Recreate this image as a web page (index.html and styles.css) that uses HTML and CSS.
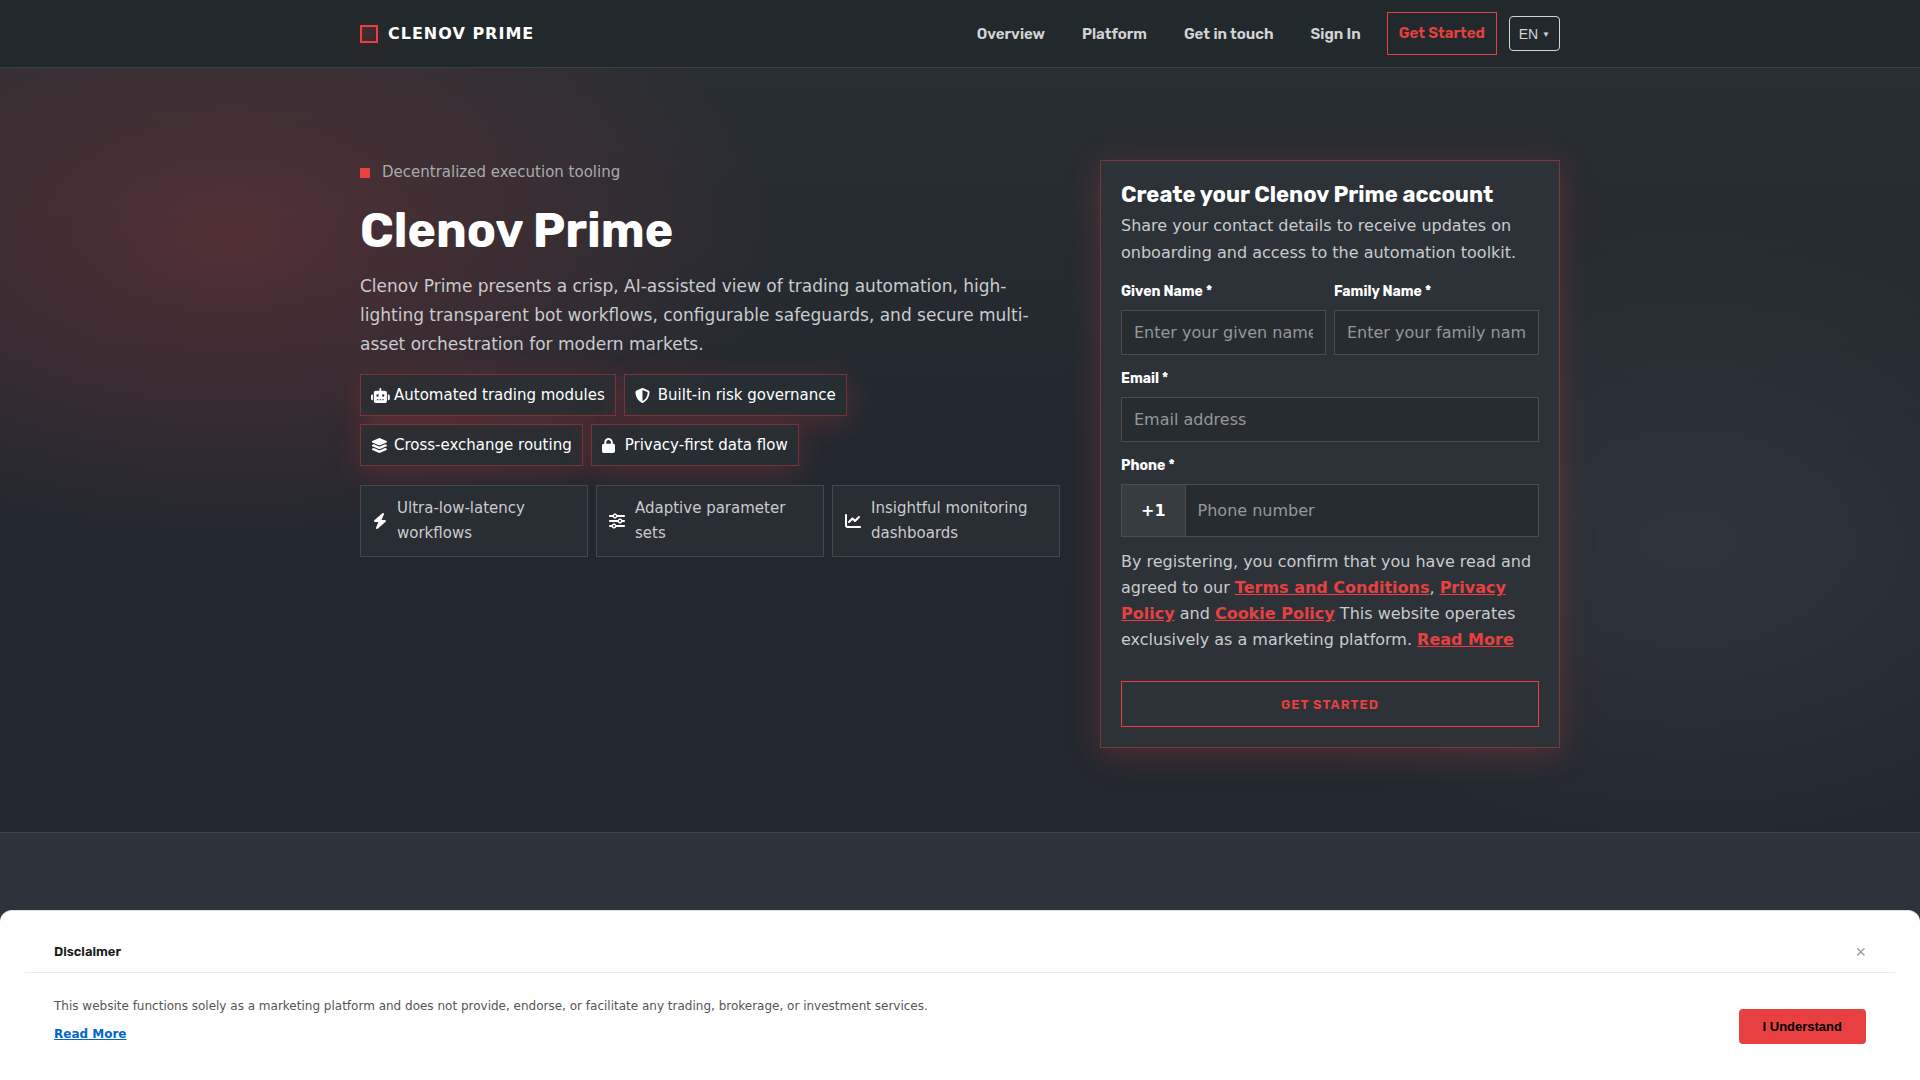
FILE: index.html
```html
<!DOCTYPE html>
<html lang="en">

<head>
    <meta charset="UTF-8">
    <meta name="viewport" content="width=device-width, initial-scale=1.0">
    <title>Clenov Prime</title>
    <link rel="stylesheet" href="styles.css">
</head>

<body>
    <header class="site-header">
        <div class="container header-inner">
            <a href="#" class="brand">
                <span class="brand-mark"></span>
                <span>CLENOV PRIME</span>
            </a>
            <nav class="nav">
                <a href="#overview" class="nav-link">Overview</a>
                <a href="#platform" class="nav-link">Platform</a>
                <a href="#contact" class="nav-link">Get in touch</a>
                <a href="#signin" class="nav-link">Sign In</a>
                <a href="#signup" class="nav-cta">Get Started</a>
                <button type="button" class="lang-button">EN <span class="caret">▼</span></button>
            </nav>
        </div>
    </header>

    <main>
        <section class="hero">
            <div class="container hero-grid">
                <div class="hero-copy">
                    <p class="eyebrow"><span class="eyebrow-mark"></span>Decentralized execution tooling</p>
                    <h1>Clenov Prime</h1>
                    <p class="lead">Clenov Prime presents a crisp, AI-assisted view of trading automation, high-lighting transparent bot workflows, configurable safeguards, and secure multi-asset orchestration for modern markets.</p>

                    <ul class="chips">
                        <li class="chip">
                            <span class="chip-icon"><svg viewBox="0 0 640 512"><path d="M320 0c17.7 0 32 14.3 32 32l0 64 120 0c39.8 0 72 32.2 72 72l0 272c0 39.8-32.2 72-72 72l-304 0c-39.8 0-72-32.2-72-72l0-272c0-39.8 32.2-72 72-72l120 0 0-64c0-17.7 14.3-32 32-32zM208 384c-8.8 0-16 7.2-16 16s7.2 16 16 16l32 0c8.8 0 16-7.2 16-16s-7.2-16-16-16l-32 0zm96 0c-8.8 0-16 7.2-16 16s7.2 16 16 16l32 0c8.8 0 16-7.2 16-16s-7.2-16-16-16l-32 0zm96 0c-8.8 0-16 7.2-16 16s7.2 16 16 16l32 0c8.8 0 16-7.2 16-16s-7.2-16-16-16l-32 0zM264 256a40 40 0 1 0 -80 0 40 40 0 1 0 80 0zm152 40a40 40 0 1 0 0-80 40 40 0 1 0 0 80zM48 224l16 0 0 192-16 0c-26.5 0-48-21.5-48-48l0-96c0-26.5 21.5-48 48-48zm544 0c26.5 0 48 21.5 48 48l0 96c0 26.5-21.5 48-48 48l-16 0 0-192 16 0z"/></svg></span>
                            Automated trading modules
                        </li>
                        <li class="chip">
                            <span class="chip-icon"><svg viewBox="0 0 512 512"><path d="M256 0c4.6 0 9.2 1 13.4 2.9L457.7 82.8c22 9.3 38.4 31 38.3 57.2c-.5 99.2-41.3 280.7-213.6 363.2c-16.7 8-36.1 8-52.8 0C57.3 420.7 16.5 239.2 16 140c-.1-26.2 16.3-47.9 38.3-57.2L242.7 2.9C246.8 1 251.4 0 256 0zm0 66.8l0 378.1C394 378 431.1 230.1 432 141.4L256 66.8s0 0 0 0z"/></svg></span>
                            Built-in risk governance
                        </li>
                        <li class="chip">
                            <span class="chip-icon"><svg viewBox="0 0 576 512"><path d="M264.5 5.2c14.9-6.9 32.1-6.9 47 0l218.6 101c8.5 3.9 13.9 12.4 13.9 21.8s-5.4 17.9-13.9 21.8l-218.6 101c-14.9 6.9-32.1 6.9-47 0L45.9 149.8C37.4 145.8 32 137.3 32 128s5.4-17.9 13.9-21.8L264.5 5.2zM476.9 209.6l53.2 24.6c8.5 3.9 13.9 12.4 13.9 21.8s-5.4 17.9-13.9 21.8l-218.6 101c-14.9 6.9-32.1 6.9-47 0L45.9 277.8C37.4 273.8 32 265.3 32 256s5.4-17.9 13.9-21.8l53.2-24.6 152 70.2c23.4 10.8 50.4 10.8 73.8 0l152-70.2zm-152 198.2l152-70.2 53.2 24.6c8.5 3.9 13.9 12.4 13.9 21.8s-5.4 17.9-13.9 21.8l-218.6 101c-14.9 6.9-32.1 6.9-47 0L45.9 405.8C37.4 401.8 32 393.3 32 384s5.4-17.9 13.9-21.8l53.2-24.6 152 70.2c23.4 10.8 50.4 10.8 73.8 0z"/></svg></span>
                            Cross-exchange routing
                        </li>
                        <li class="chip">
                            <span class="chip-icon"><svg viewBox="0 0 448 512"><path d="M144 144l0 48 160 0 0-48c0-44.2-35.8-80-80-80s-80 35.8-80 80zM80 192l0-48C80 64.5 144.5 0 224 0s144 64.5 144 144l0 48 16 0c35.3 0 64 28.7 64 64l0 192c0 35.3-28.7 64-64 64L64 512c-35.3 0-64-28.7-64-64L0 256c0-35.3 28.7-64 64-64l16 0z"/></svg></span>
                            Privacy-first data flow
                        </li>
                    </ul>

                    <ul class="features">
                        <li class="feature">
                            <svg viewBox="0 0 448 512"><path d="M349.4 44.6c5.9-13.7 1.5-29.7-10.6-38.5s-28.6-8-39.9 1.8l-256 224c-10 8.8-13.6 22.9-8.9 35.3S50.7 288 64 288l111.5 0L98.6 467.4c-5.9 13.7-1.5 29.7 10.6 38.5s28.6 8 39.9-1.8l256-224c10-8.8 13.6-22.9 8.9-35.3s-16.6-20.7-30-20.7l-111.5 0L349.4 44.6z"/></svg>
                            <span>Ultra-low-latency workflows</span>
                        </li>
                        <li class="feature">
                            <svg viewBox="0 0 512 512"><path d="M0 416c0 17.7 14.3 32 32 32l54.7 0c12.3 28.3 40.5 48 73.3 48s61-19.7 73.3-48L480 448c17.7 0 32-14.3 32-32s-14.3-32-32-32l-246.7 0c-12.3-28.3-40.5-48-73.3-48s-61 19.7-73.3 48L32 384c-17.7 0-32 14.3-32 32zm128 0a32 32 0 1 1 64 0 32 32 0 1 1 -64 0zM320 256a32 32 0 1 1 64 0 32 32 0 1 1 -64 0zm32-80c-32.8 0-61 19.7-73.3 48L32 224c-17.7 0-32 14.3-32 32s14.3 32 32 32l246.7 0c12.3 28.3 40.5 48 73.3 48s61-19.7 73.3-48l54.7 0c17.7 0 32-14.3 32-32s-14.3-32-32-32l-54.7 0c-12.3-28.3-40.5-48-73.3-48zM192 128a32 32 0 1 1 0-64 32 32 0 1 1 0 64zm73.3-64C253 35.7 224.8 16 192 16s-61 19.7-73.3 48L32 64C14.3 64 0 78.3 0 96s14.3 32 32 32l86.7 0c12.3 28.3 40.5 48 73.3 48s61-19.7 73.3-48L480 128c17.7 0 32-14.3 32-32s-14.3-32-32-32L265.3 64z"/></svg>
                            <span>Adaptive parameter sets</span>
                        </li>
                        <li class="feature">
                            <svg viewBox="0 0 512 512"><path d="M64 64c0-17.7-14.3-32-32-32S0 46.3 0 64L0 400c0 44.2 35.8 80 80 80l400 0c17.7 0 32-14.3 32-32s-14.3-32-32-32L80 416c-8.8 0-16-7.2-16-16L64 64zm406.6 86.6c12.5-12.5 12.5-32.8 0-45.3s-32.8-12.5-45.3 0L320 210.7l-57.4-57.4c-12.5-12.5-32.8-12.5-45.3 0l-112 112c-12.5 12.5-12.5 32.8 0 45.3s32.8 12.5 45.3 0L240 221.3l57.4 57.4c12.5 12.5 32.8 12.5 45.3 0l128-128z"/></svg>
                            <span>Insightful monitoring dashboards</span>
                        </li>
                    </ul>
                </div>

                <div class="card" id="signup">
                    <h2>Create your Clenov Prime account</h2>
                    <p class="card-intro">Share your contact details to receive updates on onboarding and access to the automation toolkit.</p>

                    <form class="form">
                        <div class="form-row">
                            <div class="field">
                                <label for="firstName">Given Name *</label>
                                <input type="text" id="firstName" placeholder="Enter your given name">
                            </div>
                            <div class="field">
                                <label for="lastName">Family Name *</label>
                                <input type="text" id="lastName" placeholder="Enter your family name">
                            </div>
                        </div>
                        <div class="field">
                            <label for="email">Email *</label>
                            <input type="email" id="email" placeholder="Email address">
                        </div>
                        <div class="field">
                            <label for="phone">Phone *</label>
                            <div class="phone">
                                <span class="phone-code">+1</span>
                                <input type="tel" id="phone" placeholder="Phone number">
                            </div>
                        </div>
                        <p class="legal">By registering, you confirm that you have read and agreed to our <a href="#terms">Terms and Conditions</a>, <a href="#privacy">Privacy Policy</a> and <a href="#cookies">Cookie Policy</a> This website operates exclusively as a marketing platform. <a href="#more">Read More</a></p>
                        <button type="submit" class="submit">GET STARTED</button>
                    </form>
                </div>
            </div>
        </section>

        <section class="overview" id="overview"></section>
    </main>

    <aside class="disclaimer">
        <div class="disclaimer-head">
            <h3>Disclaimer</h3>
            <button type="button" class="close" aria-label="Close">×</button>
        </div>
        <div class="disclaimer-body">
            <div>
                <p>This website functions solely as a marketing platform and does not provide, endorse, or facilitate any trading, brokerage, or investment services.</p>
                <a href="#more">Read More</a>
            </div>
            <button type="button" class="accept">I Understand</button>
        </div>
    </aside>
</body>

</html>
```
FILE: styles.css
```css
* {
    box-sizing: border-box;
}

body {
    display: flex;
    flex-direction: column;
    min-height: 100vh;
    margin: 0;
    background-color: #24282f;
    color: #ffffff;
    font-family: 'DejaVu Sans', Verdana, sans-serif;
    font-size: 16px;
}

h1,
h2,
h3,
p,
ul {
    margin: 0;
    padding: 0;
}

ul {
    list-style: none;
}

svg {
    display: block;
    fill: #ffffff;
}

.container {
    width: 100%;
    max-width: 1240px;
    margin: 0 auto;
    padding: 0 20px;
}

/* header */
.site-header {
    background-color: #22292c;
    border-bottom: 1px solid #3c4043;
}

.header-inner {
    display: flex;
    justify-content: space-between;
    align-items: center;
    padding-top: 12px;
    padding-bottom: 12px;
}

.brand {
    display: flex;
    align-items: center;
    gap: 10px;
    color: #ffffff;
    font-weight: bold;
    letter-spacing: 1px;
    text-decoration: none;
}

.brand-mark {
    width: 18px;
    height: 18px;
    border: 2px solid #e84040;
    background: linear-gradient(135deg, #4b2c33, #34292f);
    box-shadow: 0 6px 30px rgba(232, 64, 64, 0.16);
}

.nav {
    display: flex;
    align-items: center;
    font-family: Rubik, Inter, sans-serif;
    font-size: 15px;
    font-weight: 600;
}

.nav-link {
    margin-right: 37px;
    color: #d3d4d5;
    text-decoration: none;
}

.nav-link:nth-child(4) {
    margin-right: 26px;
}

.nav-cta {
    padding: 0 11px;
    border: 1px solid #e84040;
    color: #e84040;
    line-height: 41px;
    text-decoration: none;
}

.lang-button {
    height: 35px;
    margin-left: 12px;
    padding: 0 9px;
    border: 1px solid #d3d4d5;
    border-radius: 4px;
    background: none;
    color: #d3d4d5;
    font-family: 'Liberation Sans', Arial, sans-serif;
    font-size: 14px;
    cursor: pointer;
}

.caret {
    font-size: 8px;
    vertical-align: 2px;
}

/* hero */
main {
    display: flex;
    flex: 1;
    flex-direction: column;
}

.hero {
    padding: 92px 0 84px;
    border-bottom: 1px solid #41454b;
    background:
        radial-gradient(ellipse 550px 310px at 12% 22%, rgba(232, 64, 64, 0.22), rgba(232, 64, 64, 0)),
        radial-gradient(ellipse 500px 330px at 88% 62%, rgba(255, 255, 255, 0.06), rgba(255, 255, 255, 0)),
        linear-gradient(180deg, #292e33, #232830 50%, #23272f);
}

.hero-grid {
    display: grid;
    grid-template-columns: 1fr 460px;
    gap: 40px;
    align-items: start;
}

.eyebrow {
    display: flex;
    align-items: center;
    gap: 12px;
    color: #a9abae;
    font-size: 15px;
    line-height: 25px;
}

.eyebrow-mark {
    width: 10px;
    height: 10px;
    background-color: #e84040;
}

h1 {
    margin-top: 19px;
    font-family: Rubik, Inter, sans-serif;
    font-size: 48px;
    line-height: 54px;
}

.lead {
    margin-top: 14px;
    color: #c9cbce;
    font-size: 17px;
    line-height: 29px;
}

.chips {
    display: flex;
    flex-wrap: wrap;
    gap: 8px;
    margin-top: 15px;
}

.chip {
    display: flex;
    align-items: center;
    gap: 8px;
    padding: 8px 10px;
    border: 1px solid rgba(232, 64, 64, 0.4);
    background-color: rgba(42, 49, 53, 0.7);
    box-shadow: 0 6px 30px rgba(232, 64, 64, 0.24);
    font-size: 15px;
    line-height: 24px;
}

.chip-icon {
    width: 15px;
}

.chip-icon svg {
    height: 15px;
}

.features {
    display: grid;
    grid-template-columns: repeat(3, 1fr);
    gap: 8px;
    margin-top: 19px;
}

.feature {
    display: flex;
    align-items: center;
    gap: 10px;
    padding: 10px 12px;
    border: 1px solid #45484b;
    background-color: #292d34;
    color: #c9cbce;
    font-size: 15px;
    line-height: 25px;
}

.feature svg {
    flex: none;
    height: 16px;
}

/* sign up card */
.card {
    padding: 20px;
    border: 1px solid rgba(232, 64, 64, 0.4);
    background-color: #2c3238;
    box-shadow: 0 6px 30px rgba(232, 64, 64, 0.26);
}

h2 {
    font-family: Rubik, Inter, sans-serif;
    font-size: 22px;
    line-height: 27px;
}

.card-intro {
    margin-top: 4px;
    color: #c9cbce;
    line-height: 27px;
}

.form {
    display: flex;
    flex-direction: column;
    gap: 12px;
    margin-top: 14px;
}

.form-row {
    display: grid;
    grid-template-columns: 1fr 1fr;
    gap: 8px;
}

.field {
    display: flex;
    flex-direction: column;
    gap: 6px;
    min-width: 0;
}

.field label {
    font-family: Rubik, Inter, sans-serif;
    font-size: 14px;
    font-weight: bold;
    line-height: 24px;
}

.field input {
    width: 100%;
    height: 45px;
    padding: 0 12px;
    border: 1px solid #494d50;
    border-radius: 0;
    background-color: #272c30;
    color: #ffffff;
    font-family: inherit;
    font-size: 16px;
}

.field input::placeholder {
    color: #95989a;
}

.phone {
    display: flex;
}

.phone-code {
    padding: 0 19px;
    border: 1px solid #494d50;
    border-right: none;
    background-color: #373c40;
    font-weight: bold;
    line-height: 51px;
}

.phone input {
    flex: 1;
    height: 53px;
}

.legal {
    color: #c9cbce;
    line-height: 26px;
}

.legal a {
    color: #e84040;
    font-weight: bold;
}

.submit {
    height: 46px;
    margin-top: 16px;
    border: 1px solid #e84040;
    background: none;
    color: #e84040;
    font-family: Rubik, Inter, sans-serif;
    font-size: 13px;
    font-weight: 600;
    letter-spacing: 1px;
    cursor: pointer;
}

.overview {
    flex: 1;
    background-color: #2c333a;
}

/* disclaimer bar */
.disclaimer {
    position: fixed;
    right: 0;
    bottom: 0;
    left: 0;
    padding: 20px 25px 36px;
    border-top: 1px solid #e0e0e0;
    border-radius: 12px 12px 0 0;
    background-color: #ffffff;
    color: #1a1a1a;
}

.disclaimer-head {
    display: flex;
    justify-content: space-between;
    align-items: center;
    padding: 10px 29px;
    border-bottom: 1px solid #ebebeb;
}

h3 {
    font-family: Rubik, Inter, sans-serif;
    font-size: 13px;
    font-weight: 600;
    line-height: 21px;
}

.close {
    padding: 0;
    border: none;
    background: none;
    color: #999999;
    font-family: 'Liberation Sans', Arial, sans-serif;
    font-size: 18px;
    line-height: 20px;
    cursor: pointer;
}

.disclaimer-body {
    display: flex;
    justify-content: space-between;
    align-items: flex-end;
    gap: 20px;
    padding: 22px 29px 0;
}

.disclaimer-body p {
    margin-bottom: 6px;
    color: #555555;
    font-size: 12px;
    line-height: 22px;
}

.disclaimer-body a {
    color: #0066cc;
    font-size: 12px;
    font-weight: bold;
    line-height: 20px;
}

.accept {
    height: 35px;
    padding: 0 24px;
    border: none;
    border-radius: 4px;
    background-color: #e84040;
    color: #000000;
    font-family: 'Liberation Sans', Arial, sans-serif;
    font-size: 13px;
    font-weight: bold;
    white-space: nowrap;
    cursor: pointer;
}

@media (max-width: 1100px) {
    .hero-grid {
        grid-template-columns: 1fr;
    }
}

@media (max-width: 700px) {
    .header-inner,
    .nav {
        flex-wrap: wrap;
    }

    .features {
        grid-template-columns: 1fr;
    }
}
```
